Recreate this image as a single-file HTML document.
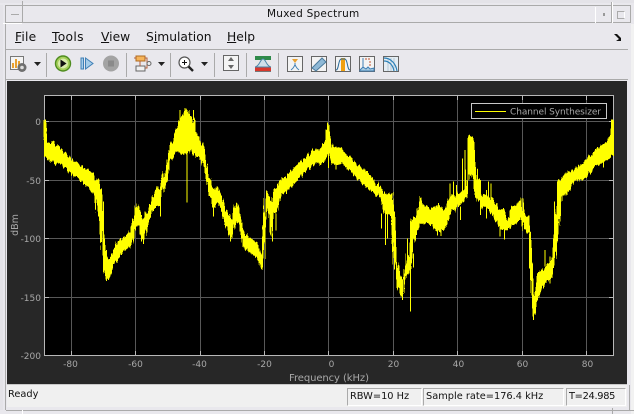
<!DOCTYPE html>
<html><head><meta charset="utf-8"><style>
html,body{margin:0;padding:0}
body{width:634px;height:414px;overflow:hidden;position:relative;background:#e9e8ed;font-family:"DejaVu Sans",sans-serif}
.a{position:absolute}
.m{position:absolute;top:29px;font-size:12.3px;line-height:17px;color:#111;white-space:nowrap}
.s{position:absolute;background:#aaa;width:1px;top:53px;height:24px}
.st{position:absolute;top:388px;height:16px;background:#f0f0f0;border-top:1px solid #aaa;border-left:1px solid #aaa;border-right:1px solid #fff;border-bottom:1px solid #fff;font-size:9.8px;line-height:16px;color:#111;white-space:nowrap;box-sizing:content-box;padding-left:2px}
.ic{position:absolute;top:55px}
</style></head><body>
<div class="a" style="left:0;top:0;width:634px;height:3px;background:#e4e3e8"></div>
<div class="a" style="left:6px;top:5px;width:624px;height:1px;background:#aaa"></div>
<div class="a" style="left:6px;top:22px;width:624px;height:1px;background:#aaa"></div>
<div class="a" style="left:5px;top:5px;width:1px;height:405px;background:#aaa"></div>
<div class="a" style="left:630px;top:5px;width:1px;height:18px;background:#aaa"></div>
<div class="a" style="left:1px;top:23px;width:21px;height:1px;background:#fff"></div>
<div class="a" style="left:22px;top:1px;width:1px;height:22px;background:#aaa"></div>
<div class="a" style="left:11px;top:14px;width:8px;height:1px;background:#aaa"></div>
<div class="a" style="left:595px;top:7px;width:1px;height:16px;background:#fff"></div>
<div class="a" style="left:611px;top:2px;width:1px;height:21px;background:#aaa"></div>
<div class="a" style="left:612px;top:2px;width:1px;height:21px;background:#fff"></div>
<div class="a" style="left:603px;top:13px;width:2px;height:3px;background:#999"></div>
<div class="a" style="left:617px;top:11px;width:6px;height:6px;border:1px solid #aaa;border-right-color:#fff;border-top-color:#aaa;background:#e9e8ed"></div>
<div class="a" style="left:0;top:5px;width:3px;height:405px;background:#e4e3e8"></div>
<div class="a" style="left:631px;top:24px;width:3px;height:390px;background:#f2f2f2"></div>
<div class="a" style="left:267px;top:7px;font-size:10.5px;line-height:14px;color:#111;white-space:nowrap;letter-spacing:.25px">Muxed Spectrum</div>

<div class="m" style="left:15px;letter-spacing:.2px"><u>F</u>ile</div>
<div class="m" style="left:52px;letter-spacing:.3px"><u>T</u>ools</div>
<div class="m" style="left:101px"><u>V</u>iew</div>
<div class="m" style="left:146px">S<u>i</u>mulation</div>
<div class="m" style="left:227px"><u>H</u>elp</div>
<svg class="a" style="left:613px;top:33px" width="10" height="9"><path d="M1 1L4 1L8 5L8 2L8 8L3 8L6 6L3 3Z" fill="#111"/></svg>

<div class="a" style="left:6px;top:49px;width:622px;height:1px;background:#aaa"></div>
<div class="s" style="left:46px"></div><div class="s" style="left:126px"></div><div class="s" style="left:170px"></div><div class="s" style="left:214px"></div><div class="s" style="left:246px"></div><div class="s" style="left:278px"></div>
<div class="a" style="left:6px;top:79px;width:622px;height:1px;background:#aaa"></div>

<svg class="ic" style="left:9px;top:56px" width="20" height="17"><rect x="1.500" y=".5" width="13" height="13" fill="#f4f4f4" stroke="#777"/><path d="M4 12V7M7 12V3M10 12V5" stroke="#e8a030" stroke-width="2"/><circle cx="13" cy="11.500" r="4.500" fill="#6f6f6f"/><circle cx="13" cy="11.500" r="1.800" fill="#ddd"/></svg>
<svg class="a" style="left:34px;top:62px" width="7" height="5"><path d="M0 0H7L3.500 4Z" fill="#222"/></svg>
<svg class="ic" style="left:54px" width="19" height="19"><circle cx="9" cy="8.500" r="7.500" fill="#a5cf5a" stroke="#4f8c1f" stroke-width="1.400"/><circle cx="9" cy="8.500" r="5" fill="#d9ecaa"/><path d="M6.500 4.500L12.500 8.500L6.500 12.500Z" fill="#111"/></svg>
<svg class="ic" style="left:80px;top:57px" width="15" height="15"><rect x="1" y="1" width="2.500" height="11" fill="#a6cdea" stroke="#3f7fb5"/><path d="M5.500 1L13 6.500L5.500 12Z" fill="#a6cdea" stroke="#3f7fb5"/></svg>
<svg class="ic" style="left:102px" width="18" height="18"><circle cx="9" cy="8.500" r="8" fill="#a3a3a3"/><rect x="6" y="5.500" width="6" height="6" fill="#8a8a8a"/></svg>
<svg class="ic" style="left:134px" width="18" height="19"><rect x="2" y="1" width="9" height="5" fill="#f5b45a" stroke="#b06a20"/><rect x="2" y="11" width="9" height="5" fill="#f0f0f0" stroke="#666"/><path d="M6 6V11M0 3H2M11 3H13V8H14M11 13H13V9" stroke="#b5603a" fill="none"/><circle cx="15" cy="8.500" r="2" fill="#eee" stroke="#666"/></svg>
<svg class="a" style="left:158px;top:62px" width="7" height="5"><path d="M0 0H7L3.500 4Z" fill="#222"/></svg>
<svg class="ic" style="left:178px;top:56px" width="17" height="17"><circle cx="6.500" cy="6.500" r="5.500" fill="#fff" stroke="#555" stroke-width="1.200"/><path d="M4 6.500H9M6.500 4V9" stroke="#111"/><path d="M10.500 10.500L15 15" stroke="#222" stroke-width="2.400"/></svg>
<svg class="a" style="left:201px;top:62px" width="7" height="5"><path d="M0 0H7L3.500 4Z" fill="#222"/></svg>
<svg class="ic" style="left:223px;top:55px" width="16" height="17"><rect x=".5" y=".5" width="15" height="15" fill="#f4f4f4" stroke="#666"/><path d="M8 2L5 6H11ZM8 14L5 10H11Z" fill="#666"/></svg>
<svg class="ic" style="left:255px;top:56px" width="16" height="16"><rect width="16" height="16" fill="#e8e8e8"/><rect width="16" height="4" fill="#2f8a4a"/><rect y="11" width="16" height="4" fill="#d8382c"/><path d="M0 11C5 10 5 3 8 3C11 3 11 10 16 11Z" fill="#cfe0ea" stroke="#4a86a8"/><rect y="15" width="16" height="1" fill="#777"/></svg>
<svg class="ic" style="left:287px;top:56px" width="16" height="16"><rect x=".5" y=".5" width="15" height="15" fill="#f3f3f3" stroke="#666"/><path d="M5 3H11L8 7Z" fill="#e8a030"/><path d="M8 7V10M4 14C7 12 7 10 8 9C9 10 9 12 12 14" stroke="#3f7fb5" fill="none"/></svg>
<svg class="ic" style="left:311px;top:56px" width="16" height="16"><rect x=".5" y=".5" width="15" height="15" fill="#f3f3f3" stroke="#666"/><path d="M1 12L11 2L15 6L5 15Z" fill="#8fb9d6" stroke="#4a7a9c"/></svg>
<svg class="ic" style="left:335px;top:56px" width="16" height="16"><rect x=".5" y=".5" width="15" height="15" fill="#f3f3f3" stroke="#666"/><rect x="6" y="2" width="4" height="13" fill="#f0a010"/><path d="M1 14C4 14 3 4 6 3H10C13 4 12 14 15 14" stroke="#2a6a9a" fill="none"/></svg>
<svg class="ic" style="left:359px;top:56px" width="16" height="16"><rect x=".5" y=".5" width="15" height="15" fill="#f3f3f3" stroke="#666"/><path d="M4 2V12" stroke="#3f7fb5"/><path d="M6 3H12M12 6H10M12 9H10" stroke="#c0502c" stroke-dasharray="2 1"/><path d="M1 14L4 11L7 13L9 11L11 13L15 12V15H1Z" fill="#a8cbe0" stroke="#3f7fb5"/></svg>
<svg class="ic" style="left:383px;top:56px" width="16" height="16"><rect x=".5" y=".5" width="15" height="15" fill="#e4edf3" stroke="#666"/><path d="M5 2V15M8 2V15M11 2V15" stroke="#b5c8d5"/><path d="M1 2C8 2 13 8 14 15M1 5C6 5 10 9 11 15" stroke="#2a80b8" fill="none" stroke-width="1.200"/></svg>

<svg class="a" style="left:7px;top:81px" width="620" height="304" viewBox="7 81 620 304">
<rect x="7" y="81" width="620" height="304" fill="#272727"/>
<rect x="44" y="95" width="570" height="261" fill="#000"/>
<g stroke="#585858" shape-rendering="crispEdges">
<path d="M71.500 96V355M135.500 96V355M200.500 96V355M264.500 96V355M328.500 96V355M393.500 96V355M457.500 96V355M522.500 96V355M586.500 96V355M45 121.500H613M45 180.500H613M45 238.500H613M45 297.500H613"/>
</g>
<g stroke="#b8b8b8" shape-rendering="crispEdges">
<path d="M44.500 95.500H613.500V355.500H44.500Z" fill="none"/>
<path d="M71.500 96V100M135.500 96V100M200.500 96V100M264.500 96V100M328.500 96V100M393.500 96V100M457.500 96V100M522.500 96V100M586.500 96V100M71.500 351V355M135.500 351V355M200.500 351V355M264.500 351V355M328.500 351V355M393.500 351V355M457.500 351V355M522.500 351V355M586.500 351V355M45 121.500H49M45 180.500H49M45 238.500H49M45 297.500H49M609 121.500H613M609 180.500H613M609 238.500H613M609 297.500H613"/>
</g>
<defs><filter id="j" x="0" y="0" width="634" height="414" filterUnits="userSpaceOnUse" color-interpolation-filters="sRGB"><feTurbulence type="fractalNoise" baseFrequency="0.6 0.004" numOctaves="2" seed="4"/><feDisplacementMap in="SourceGraphic" scale="7" xChannelSelector="G" yChannelSelector="R"/></filter></defs>
<g filter="url(#j)" fill="#ffff00" stroke="#ffff00" stroke-width="4" shape-rendering="crispEdges">
<g transform="translate(40 100) scale(.33333)"><polygon points="15,60 20,120 30,135 40,125 60,150 80,165 100,185 120,195 140,210 160,218 165,240 178,238 182,290 188,350 195,450 200,475 210,480 220,460 230,430 250,415 270,400 280,360 290,315 300,335 305,370 315,340 325,340 330,320 345,280 352,262 360,280 365,250 380,200 390,145 400,120 410,95 420,55 430,45 440,30 450,50 460,55 470,95 480,120 490,145 500,200 510,245 520,270 530,260 545,290 555,330 565,340 572,370 580,330 590,315 600,350 610,400 630,415 650,430 660,460 666,465 670,380 678,275 690,290 695,330 700,280 710,265 720,245 740,230 760,205 780,190 800,175 820,150 840,150 855,130 865,70 870,100 880,150 890,145 900,150 900,190 890,195 880,190 870,160 865,150 855,175 840,185 820,190 800,210 780,230 760,250 740,270 720,290 710,330 700,345 695,410 690,340 678,320 670,440 666,505 660,490 650,470 630,455 610,440 600,380 590,360 580,390 572,410 565,385 555,375 545,325 530,300 520,320 510,280 500,235 490,190 480,170 470,170 460,150 450,150 440,160 430,160 420,160 410,150 400,170 390,180 380,240 365,280 360,320 352,315 345,320 330,345 325,370 315,400 305,420 300,380 290,370 280,410 270,440 250,450 230,480 220,490 210,530 200,540 195,520 188,460 182,370 178,360 165,280 160,275 140,255 120,235 100,225 80,205 60,190 40,190 30,180 20,170 15,165"/></g>
<g transform="translate(320 100) scale(.33333)"><polygon points="0,145 15,125 25,70 35,145 45,145 60,145 80,160 100,190 120,200 140,215 160,240 180,265 195,285 205,285 215,280 222,370 230,490 240,520 248,550 255,520 262,460 270,490 276,360 290,350 300,295 310,320 320,320 335,330 355,315 375,335 385,300 400,290 420,280 440,260 447,105 455,110 462,120 470,230 485,285 500,290 520,300 535,330 550,330 565,370 575,320 590,320 605,295 612,350 628,350 632,400 638,590 645,590 655,520 670,510 695,480 700,430 708,370 715,240 725,240 740,220 760,210 800,185 820,160 840,140 860,130 875,100 880,60 880,165 875,165 860,180 840,190 820,200 800,235 760,240 740,280 725,290 715,380 708,460 700,500 695,530 670,550 655,590 645,640 638,645 632,480 628,400 612,385 605,345 590,370 575,375 565,385 550,390 535,375 520,345 500,320 485,320 470,290 462,235 455,220 447,225 440,290 420,310 400,330 385,350 375,385 355,395 335,375 320,365 310,370 300,370 290,390 276,440 270,510 262,520 255,530 248,590 240,575 230,550 222,460 215,340 205,345 195,340 180,290 160,275 140,260 120,240 100,225 80,195 60,185 45,190 35,165 25,150 15,180 0,190"/></g>
</g>
<g fill="none" stroke="#ffff00" stroke-width="3" shape-rendering="crispEdges">
<path transform="translate(40 100) scale(.33333)" d="M16 58V170M190 305V460M441 160V308M520 300V350M361 300V350M310 400V432M670 380V450M698 400V425M708 340V392M572 400V425M200 450V543M420 30V70M460 30V60M440 28V50M215 460V520M270 400V440M888 140V208M866 150V204"/>
<path transform="translate(320 100) scale(.33333)" d="M271 480V635M262 415V520M196 330V435M202 340V415M185 340V385M280 460V503M352 370V407M363 380V408M312 340V373M289 380V405M421 320V360M427 175V300M435 150V280M390 250V300M400 245V330M410 255V320M481 240V345M500 270V355M513 250V340M505 245V300M540 380V410M553 380V418M628 400V505M675 450V500M690 470V550M703 305V400M640 620V660M850 170V203M878 58V100M248 570V600"/>
</g>
<rect x="471.500" y="103.500" width="135" height="15" fill="#000" stroke="#c8c8c8" shape-rendering="crispEdges"/>
<path d="M475 111.500H506" stroke="#ffff00" shape-rendering="crispEdges"/>
<g font-family="'DejaVu Sans',sans-serif" font-size="9" fill="#a8a8a8">
<text x="510" y="114.500" textLength="91">Channel Synthesizer</text>
<text x="41" y="125" text-anchor="end">0</text>
<text x="41" y="184" text-anchor="end">-50</text>
<text x="41" y="242" text-anchor="end">-100</text>
<text x="41" y="301" text-anchor="end">-150</text>
<text x="41" y="359" text-anchor="end">-200</text>
<text x="70.500" y="367" text-anchor="middle">-80</text>
<text x="135.500" y="367" text-anchor="middle">-60</text>
<text x="199.500" y="367" text-anchor="middle">-40</text>
<text x="264.500" y="367" text-anchor="middle">-20</text>
<text x="331.500" y="367" text-anchor="middle">0</text>
<text x="393.500" y="367" text-anchor="middle">20</text>
<text x="458.500" y="367" text-anchor="middle">40</text>
<text x="522.500" y="367" text-anchor="middle">60</text>
<text x="587.500" y="367" text-anchor="middle">80</text>
<text x="289" y="381" font-size="10" textLength="80">Frequency (kHz)</text>
<text transform="translate(18 225) rotate(-90)" font-size="9.500" text-anchor="middle">dBm</text>
</g>
</svg>

<div class="a" style="left:7px;top:385px;width:620px;height:22px;background:#f0f0f0"></div>
<div class="a" style="left:7px;top:384px;width:620px;height:1px;background:#c8c8c8"></div>
<div class="a" style="left:8px;top:387px;font-size:9.8px;line-height:16px;color:#111">Ready</div>
<div class="st" style="left:347px;width:71px">RBW=10 Hz</div>
<div class="st" style="left:423px;width:137px">Sample rate=176.4 kHz</div>
<div class="st" style="left:566px;width:56px;letter-spacing:-.3px">T=24.985</div>
<div class="a" style="left:6px;top:410px;width:628px;height:1px;background:#aaa"></div>
<div class="a" style="left:22px;top:410px;width:1px;height:4px;background:#fff"></div>
<div class="a" style="left:612px;top:408px;width:1px;height:6px;background:#aaa"></div>
<div class="a" style="left:629px;top:385px;width:1px;height:25px;background:#aaa"></div>
</body></html>
